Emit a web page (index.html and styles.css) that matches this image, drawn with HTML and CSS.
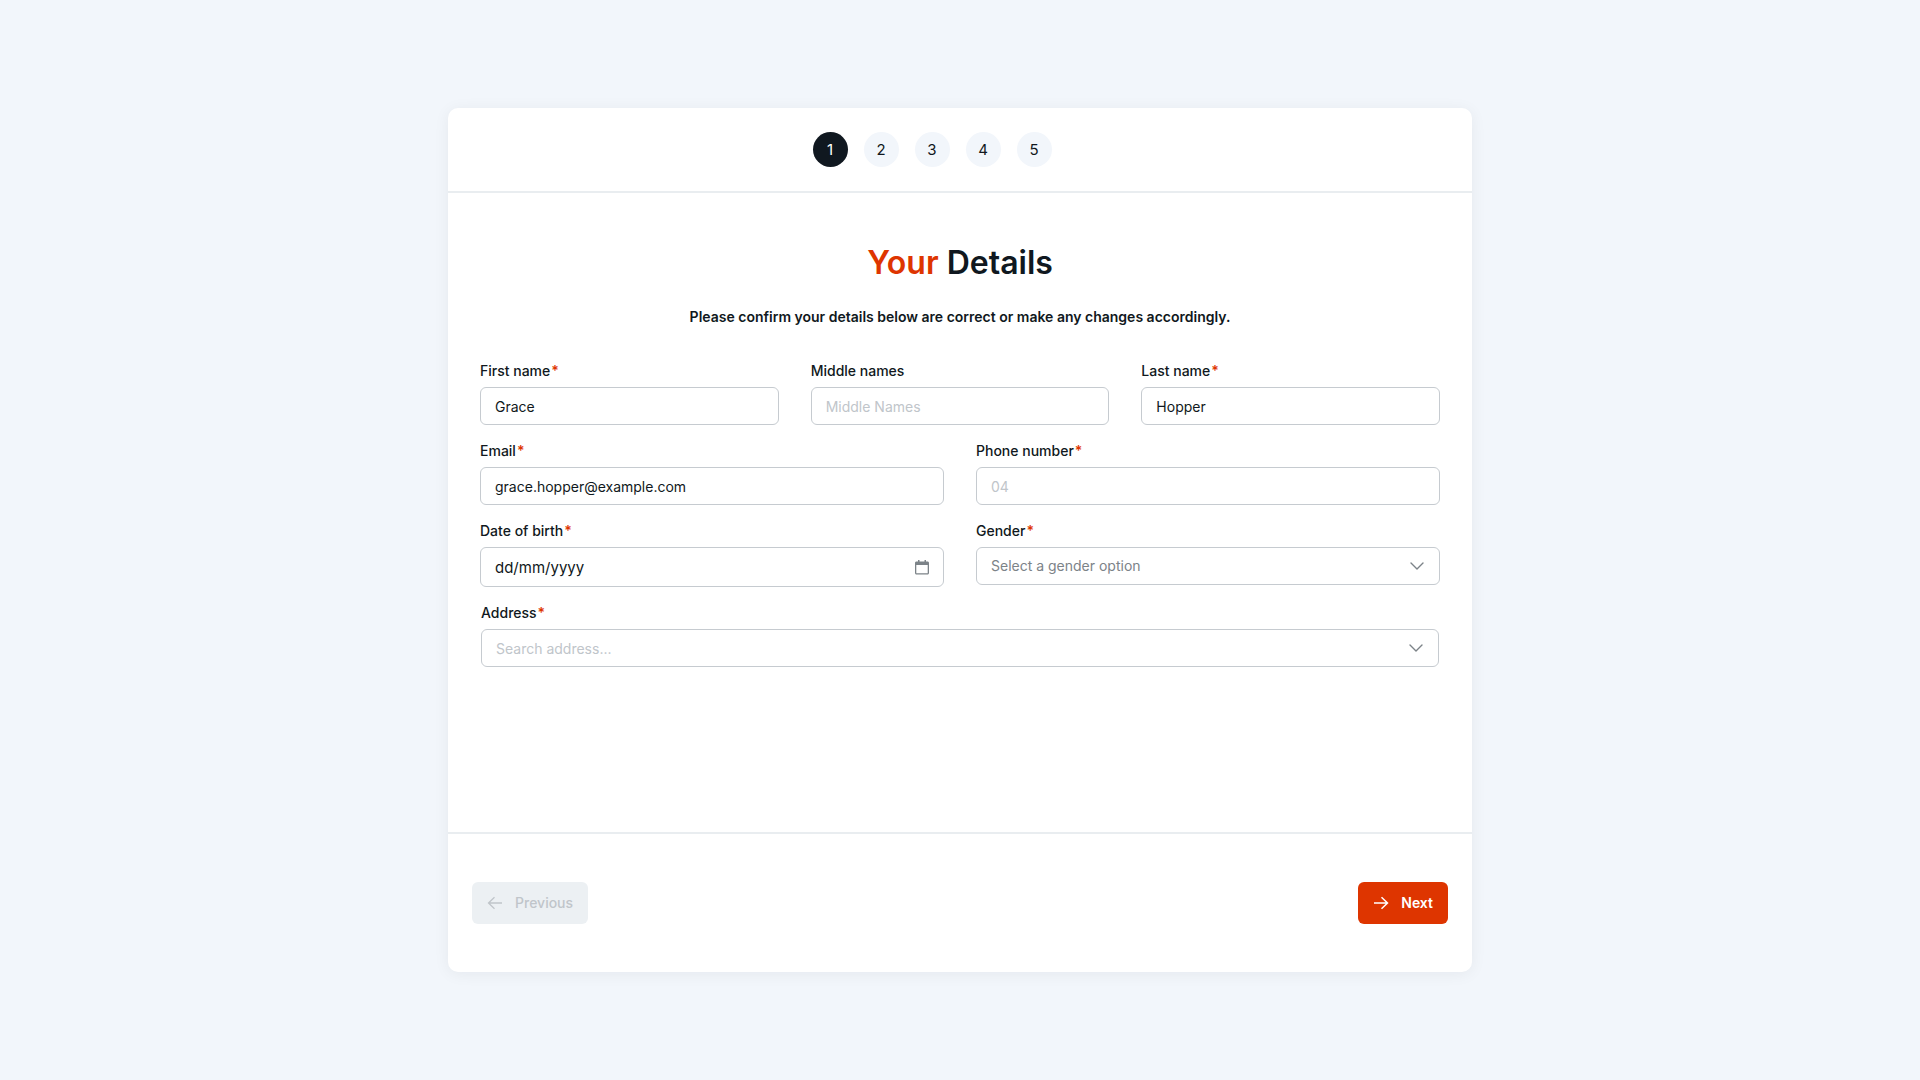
FILE: index.html
```html
<!doctype html>
<html lang="en">
<head>
	<meta charset="UTF-8">
	<meta name="viewport" content="width=device-width, initial-scale=1">
	<title>Your Details</title>
	<link rel="stylesheet" href="styles.css">
</head>
<body>

<svg class="sprite" xmlns="http://www.w3.org/2000/svg">
	<symbol id="icon-chevron" viewBox="0 0 16 16">
		<path d="M2 5l6 6 6-6" fill="none" stroke="currentColor" stroke-width="1.4" stroke-linecap="round" stroke-linejoin="round"/>
	</symbol>
	<symbol id="icon-calendar" viewBox="0 0 14 15">
		<path d="M3 0h1.5v1.5h5V0H11v1.5h1.5c.8 0 1.5.6 1.5 1.4V13c0 .9-.7 1.5-1.5 1.5h-11C.7 14.5 0 13.9 0 13V2.9c0-.8.7-1.4 1.5-1.4H3zM1.3 5v8.2h11.4V5z" fill="currentColor" fill-rule="evenodd"/>
	</symbol>
	<symbol id="icon-left" viewBox="0 0 16 16">
		<path d="M15 8H1.5M7.5 2.3L1.5 8l6 5.7" fill="none" stroke="currentColor" stroke-width="1.3"/>
	</symbol>
	<symbol id="icon-right" viewBox="0 0 16 16">
		<path d="M1 8h13.5M8.5 2.3l6 5.7-6 5.7" fill="none" stroke="currentColor" stroke-width="1.5"/>
	</symbol>
</svg>

<form class="card">
	<header class="card__header">
		<ol class="steps">
			<li class="steps__item is-active" aria-current="step">1</li>
			<li class="steps__item">2</li>
			<li class="steps__item">3</li>
			<li class="steps__item">4</li>
			<li class="steps__item">5</li>
		</ol>
	</header>

	<main class="card__body">
		<h1 class="title"><span class="title__accent">Your</span> Details</h1>
		<p class="intro">Please confirm your details below are correct or make any changes accordingly.</p>

		<div class="fields">
			<div class="row">
				<div class="field">
					<label class="field__label" for="first-name">First name<span class="field__required">*</span></label>
					<input class="field__control" id="first-name" type="text" value="Grace">
				</div>
				<div class="field">
					<label class="field__label" for="middle-names">Middle names</label>
					<input class="field__control" id="middle-names" type="text" placeholder="Middle Names">
				</div>
				<div class="field">
					<label class="field__label" for="last-name">Last name<span class="field__required">*</span></label>
					<input class="field__control" id="last-name" type="text" value="Hopper">
				</div>
			</div>

			<div class="row">
				<div class="field">
					<label class="field__label" for="email">Email<span class="field__required">*</span></label>
					<input class="field__control" id="email" type="email" value="grace.hopper@example.com">
				</div>
				<div class="field">
					<label class="field__label" for="phone">Phone number<span class="field__required">*</span></label>
					<input class="field__control" id="phone" type="tel" placeholder="04">
				</div>
			</div>

			<div class="row">
				<div class="field">
					<label class="field__label" for="dob">Date of birth<span class="field__required">*</span></label>
					<div class="field__wrap">
						<input class="field__control field__control--date" id="dob" type="text" placeholder="dd/mm/yyyy">
						<button class="field__picker" type="button" aria-label="Open calendar">
							<svg class="icon-calendar"><use href="#icon-calendar"/></svg>
						</button>
					</div>
				</div>
				<div class="field">
					<label class="field__label" for="gender">Gender<span class="field__required">*</span></label>
					<div class="field__wrap">
						<select class="field__control field__control--select" id="gender">
							<option>Select a gender option</option>
							<option>Female</option>
							<option>Male</option>
							<option>Other</option>
						</select>
						<svg class="field__chevron"><use href="#icon-chevron"/></svg>
					</div>
				</div>
			</div>

			<div class="row row--inset">
				<div class="field">
					<label class="field__label" for="address">Address<span class="field__required">*</span></label>
					<div class="field__wrap">
						<input class="field__control" id="address" type="text" placeholder="Search address...">
						<svg class="field__chevron"><use href="#icon-chevron"/></svg>
					</div>
				</div>
			</div>
		</div>
	</main>

	<footer class="card__footer">
		<button class="btn" type="button" disabled><svg class="btn__icon"><use href="#icon-left"/></svg>Previous</button>
		<button class="btn btn--primary" type="submit"><svg class="btn__icon"><use href="#icon-right"/></svg>Next</button>
	</footer>
</form>

</body>
</html>
```
FILE: styles.css
```css
* {
	margin: 0;
	padding: 0;
	box-sizing: border-box;
}
body {
	display: flex;
	align-items: center;
	justify-content: center;
	min-height: 100vh;
	background-color: #f2f6fb;
	color: #101820;
	font-family: Inter, sans-serif;
	font-size: 14px;
	line-height: 20px;
}
.sprite {
	display: none;
}

/* card */
.card {
	display: flex;
	flex-direction: column;
	width: 100%;
	max-width: 1024px;
	min-height: 80vh;
	background-color: #fff;
	border-radius: 10px;
	box-shadow: 0 2px 16px rgba(16, 24, 32, .06);
}
.card__header {
	padding: 24px;
	border-bottom: 2px solid #e9edf0;
}
.card__body {
	flex: 1;
	padding: 48px 32px;
}
.card__footer {
	display: flex;
	justify-content: space-between;
	padding: 48px 24px;
	border-top: 2px solid #e9edf0;
}

/* steps */
.steps {
	display: flex;
	justify-content: center;
	gap: 16px;
	padding-right: 56px;
	list-style: none;
}
.steps__item {
	width: 35px;
	height: 35px;
	border-radius: 50%;
	background-color: #f2f6fb;
	font-size: 15px;
	line-height: 35px;
	text-align: center;
}
.steps__item.is-active {
	background-color: #101820;
	color: #fff;
}

.title {
	margin-bottom: 20px;
	font-size: 32px;
	font-weight: 600;
	line-height: 44px;
	text-align: center;
}
.title__accent {
	color: #de3500;
}
.intro {
	margin-bottom: 32px;
	font-weight: 600;
	line-height: 24px;
	text-align: center;
}

/* fields */
.fields {
	display: grid;
	gap: 16px;
}
.row {
	display: flex;
	align-items: flex-start;
	gap: 32px;
}
.row--inset {
	padding: 0 1px;
}
.field {
	flex: 1;
	min-width: 0;
}
.field__label {
	display: block;
	margin-bottom: 6px;
	font-weight: 500;
}
.field__required {
	margin-left: 1px;
	color: #de3500;
	font-weight: 600;
}
.field__wrap {
	position: relative;
}
.field__control {
	display: block;
	width: 100%;
	height: 38px;
	padding: 0 14px;
	border: 1px solid #c6cbd0;
	border-radius: 6px;
	background-color: #fff;
	color: #101820;
	font: inherit;
	outline: none;
}
.field__control::placeholder {
	color: #c0c5ca;
}
.field__control:focus {
	border-color: #101820;
}
.field__control--date {
	height: 40px;
	font-size: 15px;
}
.field__control--date::placeholder {
	color: #101820;
}
.field__control--select {
	appearance: none;
	color: #7c8388;
}
.field__chevron {
	position: absolute;
	top: 11px;
	right: 15px;
	width: 16px;
	height: 16px;
	color: #7c8388;
	pointer-events: none;
}
.field__picker {
	position: absolute;
	top: 0;
	right: 15px;
	display: flex;
	align-items: center;
	height: 40px;
	border: 0;
	background: none;
	color: #7c8388;
	cursor: pointer;
}
.icon-calendar {
	width: 14px;
	height: 15px;
}

/* buttons */
.btn {
	display: flex;
	align-items: center;
	gap: 12px;
	height: 42px;
	padding: 0 15px;
	border: 0;
	border-radius: 6px;
	background-color: #ecf0f3;
	color: #c0c5ca;
	font: inherit;
	font-weight: 500;
}
.btn--primary {
	background-color: #de3500;
	color: #fff;
	font-weight: 600;
	cursor: pointer;
}
.btn__icon {
	width: 16px;
	height: 16px;
}
```
